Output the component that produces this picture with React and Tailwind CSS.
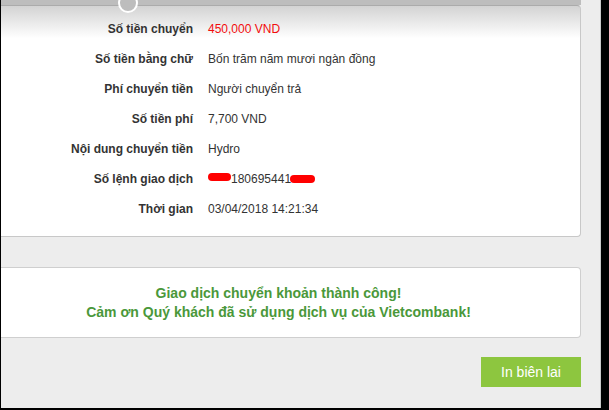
import React from 'react';

const rows = [
  { label: 'Số tiền chuyển', value: '450,000 VND', red: true },
  { label: 'Số tiền bằng chữ', value: 'Bốn trăm năm mươi ngàn đồng' },
  { label: 'Phí chuyển tiền', value: 'Người chuyển trả' },
  { label: 'Số tiền phí', value: '7,700 VND' },
  { label: 'Nội dung chuyển tiền', value: 'Hydro' },
  { label: 'Số lệnh giao dịch', value: 'ref' },
  { label: 'Thời gian', value: '03/04/2018 14:21:34' },
];

function RefNumber() {
  return (
    <span className="relative inline-flex items-center">
      <span className="absolute left-0 top-[3px] h-[8px] w-[23px] rounded-sm bg-[#ff0000]" />
      <span className="pl-[23px]">180695441</span>
      <span className="inline-block h-[8px] w-[25px] -ml-[1px] rounded-sm bg-[#ff0000]" />
    </span>
  );
}

export default function App() {
  return (
    <div
      className="flex h-[410px] w-[609px] overflow-hidden bg-black pb-[2px] pl-px pr-[8px]"
      style={{ fontFamily: '"Liberation Sans", Arial, sans-serif' }}
    >
      <div className="relative flex flex-1 flex-col border-r border-[#c9c9c9] bg-[#ededed] pr-[19px]">
        <div className="h-[5px] bg-[#bdbdbd]" />
        <div className="absolute left-[117px] top-[-7px] h-[20px] w-[20px] rounded-full border-2 border-white bg-[#bdbdbd]" />

        <div className="rounded-r-[4px] border-r border-b border-t border-[#c8c8c8] border-t-[#ababab] bg-gradient-to-b from-[#d3d3d3] via-white via-[14%] to-white pb-[12px] pt-[8px]">
          {rows.map((r) => (
            <div key={r.label} className="flex h-[30px] items-center text-[12px] text-[#333]">
              <div className="w-[192px] text-right font-bold">{r.label}</div>
              <div className={`ml-[15px] ${r.red ? 'text-[#f20d0d]' : ''}`}>
                {r.value === 'ref' ? <RefNumber /> : r.value}
              </div>
            </div>
          ))}
        </div>

        <div className="mt-[30px] flex h-[71px] flex-col items-center justify-center rounded-r-[4px] border-y border-r border-[#cfcfcf] bg-white pr-[24px] text-[14px] font-bold leading-[19px] text-[#4a983a]">
          <div>Giao dịch chuyển khoản thành công!</div>
          <div>Cảm ơn Quý khách đã sử dụng dịch vụ của Vietcombank!</div>
        </div>

        <div className="mt-[19px] flex justify-end">
          <button className="h-[30px] w-[100px] bg-[#8dc63f] text-[14px] text-white">In biên lai</button>
        </div>
      </div>
    </div>
  );
}
